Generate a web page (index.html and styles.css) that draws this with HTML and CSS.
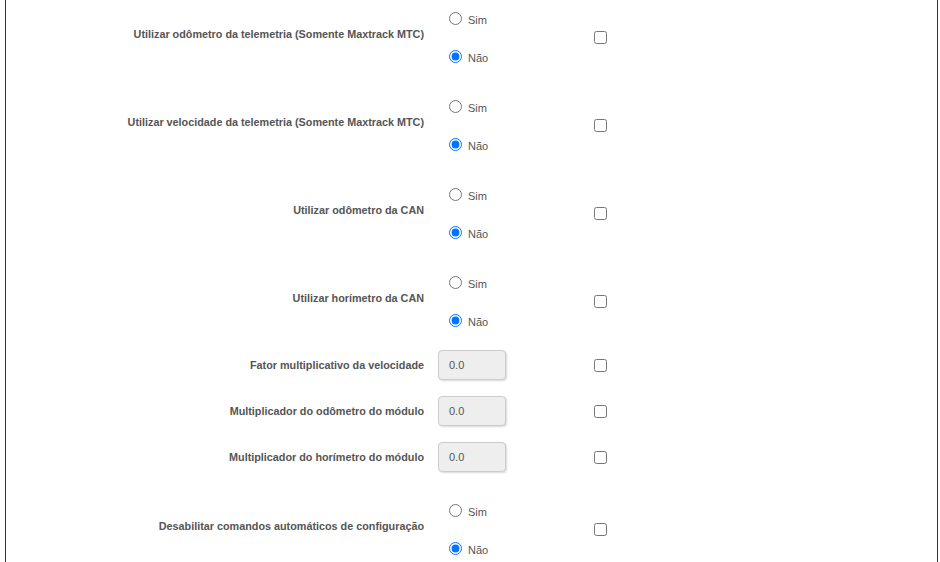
FILE: index.html
```html
<!DOCTYPE html>
<html lang="pt-BR">
<head>
<meta charset="utf-8">
<title>Configuração</title>
<link rel="stylesheet" href="styles.css">
</head>
<body>
<div class="frame">
  <div class="form">
    <div class="row row-radio">
      <div class="label">Utilizar odômetro da telemetria (Somente Maxtrack MTC)</div>
      <div class="field">
        <label class="radio"><input type="radio" name="r1"><span>Sim</span></label>
        <label class="radio"><input type="radio" name="r1" checked><span>Não</span></label>
      </div>
      <div class="check"><input type="checkbox"></div>
    </div>
    <div class="row row-radio">
      <div class="label">Utilizar velocidade da telemetria (Somente Maxtrack MTC)</div>
      <div class="field">
        <label class="radio"><input type="radio" name="r2"><span>Sim</span></label>
        <label class="radio"><input type="radio" name="r2" checked><span>Não</span></label>
      </div>
      <div class="check"><input type="checkbox"></div>
    </div>
    <div class="row row-radio">
      <div class="label">Utilizar odômetro da CAN</div>
      <div class="field">
        <label class="radio"><input type="radio" name="r3"><span>Sim</span></label>
        <label class="radio"><input type="radio" name="r3" checked><span>Não</span></label>
      </div>
      <div class="check"><input type="checkbox"></div>
    </div>
    <div class="row row-radio row-before-inputs">
      <div class="label">Utilizar horímetro da CAN</div>
      <div class="field">
        <label class="radio"><input type="radio" name="r4"><span>Sim</span></label>
        <label class="radio"><input type="radio" name="r4" checked><span>Não</span></label>
      </div>
      <div class="check"><input type="checkbox"></div>
    </div>
    <div class="row row-input">
      <div class="label">Fator multiplicativo da velocidade</div>
      <div class="field"><input class="text" type="text" value="0.0" readonly></div>
      <div class="check"><input type="checkbox"></div>
    </div>
    <div class="row row-input">
      <div class="label">Multiplicador do odômetro do módulo</div>
      <div class="field"><input class="text" type="text" value="0.0" readonly></div>
      <div class="check"><input type="checkbox"></div>
    </div>
    <div class="row row-input">
      <div class="label">Multiplicador do horímetro do módulo</div>
      <div class="field"><input class="text" type="text" value="0.0" readonly></div>
      <div class="check"><input type="checkbox"></div>
    </div>
    <div class="row row-radio row-after-inputs">
      <div class="label">Desabilitar comandos automáticos de configuração</div>
      <div class="field">
        <label class="radio"><input type="radio" name="r8"><span>Sim</span></label>
        <label class="radio"><input type="radio" name="r8" checked><span>Não</span></label>
      </div>
      <div class="check"><input type="checkbox"></div>
    </div>
  </div>
</div>
</body>
</html>
```

FILE: styles.css
```css
html, body {
  margin: 0;
  padding: 0;
  background: #fff;
  overflow: hidden;
}

body {
  font-family: "Liberation Sans", Arial, sans-serif;
  color: #555;
  font-size: 11px;
}

.frame {
  margin-left: 5px;
  width: 933px;
  box-sizing: border-box;
  border-left: 1px solid #333;
  border-right: 1px solid #333;
  min-height: 562px;
}

.form {
  margin-top: -7px;
}

.row {
  display: grid;
  grid-template-columns: 418px 142px 20px;
  column-gap: 14px;
  align-items: center;
}

.row-radio {
  height: 88px;
}

.row-radio .label {
  padding-bottom: 6px;
}

.row-before-inputs {
  margin-bottom: -3px;
}

.row-after-inputs {
  margin-top: 5px;
}

.row-input {
  height: 46px;
}

.label {
  text-align: right;
  font-weight: bold;
  font-size: 10.8px;
  color: #555;
}

.field {
  display: flex;
  flex-direction: column;
  gap: 18px;
}

.radio {
  display: flex;
  align-items: center;
  height: 20px;
  padding-left: 11px;
}

.radio input {
  margin: 0;
  width: 13px;
  height: 13px;
}

.radio span {
  margin-left: 6px;
  padding-top: 3px;
  color: #555;
}

.text {
  box-sizing: border-box;
  width: 68px;
  height: 30px;
  margin: 0;
  padding: 0 10px;
  border: 1px solid #ccc;
  border-radius: 4px;
  background: #eee;
  box-shadow: 1px 1px 2px rgba(0, 0, 0, 0.15);
  font-family: "Liberation Sans", Arial, sans-serif;
  font-size: 11px;
  color: #555;
  outline: none;
}

.check {
  display: flex;
  align-items: center;
}

.check input {
  margin: 0;
  width: 13px;
  height: 13px;
}
```
